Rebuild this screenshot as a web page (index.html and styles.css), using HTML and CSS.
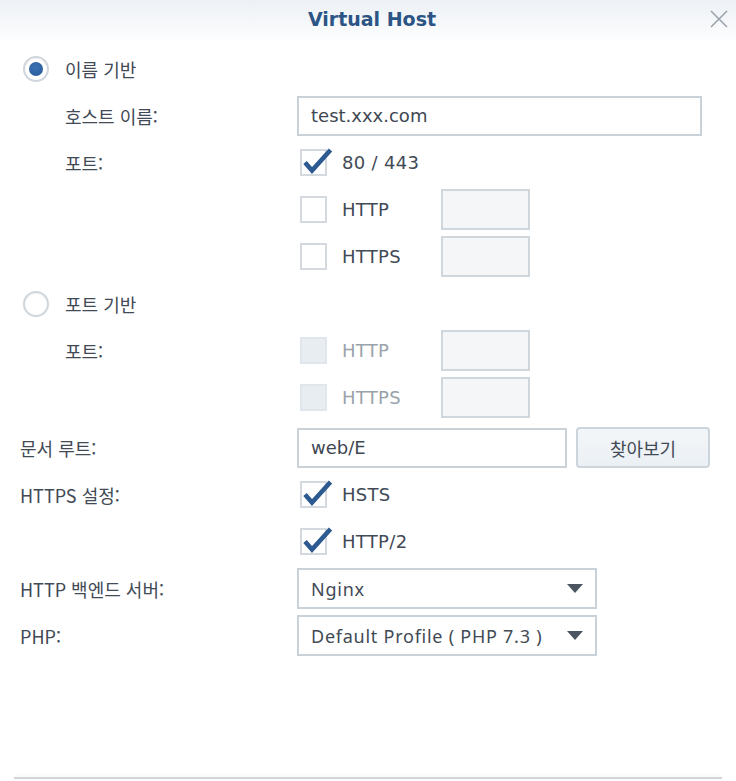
FILE: index.html
```html
<!DOCTYPE html>
<html lang="ko">
<head>
<meta charset="utf-8">
<title>Virtual Host</title>
<link rel="stylesheet" href="styles.css">
</head>
<body>
<div class="dialog">
  <header class="hdr">
    <h1 class="title">Virtual Host</h1>
    <button class="close" aria-label="닫기">
      <svg width="18" height="18" viewBox="0 0 18 18"><path d="M1 1L17 17M17 1L1 17" stroke="#9aa3ac" stroke-width="1.6" fill="none"/></svg>
    </button>
  </header>

  <main class="form">
    <div class="row radio-row">
      <span class="radio on"></span><span class="radio-label">이름 기반</span>
    </div>
    <div class="row sub">
      <span class="lbl">호스트 이름:</span>
      <div class="input wide">test.xxx.com</div>
    </div>
    <div class="row sub">
      <span class="lbl">포트:</span>
      <div class="ctl">
        <span class="cb"><svg class="tick" width="32" height="30" viewBox="0 0 32 30"><path d="M3 15.5L10 23.5L28.5 3" stroke="#2c5a91" stroke-width="4.6" fill="none" stroke-linejoin="miter"/></svg></span>
        <span class="cb-label">80 / 443</span>
      </div>
    </div>
    <div class="row sub">
      <span class="lbl"></span>
      <div class="ctl">
        <span class="cb"></span><span class="cb-label port">HTTP</span><span class="port-input"></span>
      </div>
    </div>
    <div class="row sub">
      <span class="lbl"></span>
      <div class="ctl">
        <span class="cb"></span><span class="cb-label port">HTTPS</span><span class="port-input"></span>
      </div>
    </div>

    <div class="row radio-row">
      <span class="radio"></span><span class="radio-label">포트 기반</span>
    </div>
    <div class="row sub">
      <span class="lbl">포트:</span>
      <div class="ctl">
        <span class="cb disabled"></span><span class="cb-label port muted">HTTP</span><span class="port-input"></span>
      </div>
    </div>
    <div class="row sub">
      <span class="lbl"></span>
      <div class="ctl">
        <span class="cb disabled"></span><span class="cb-label port muted">HTTPS</span><span class="port-input"></span>
      </div>
    </div>

    <div class="row top spaced">
      <span class="lbl">문서 루트:</span>
      <div class="input root">web/E</div>
      <button class="btn">찾아보기</button>
    </div>
    <div class="row top">
      <span class="lbl">HTTPS 설정:</span>
      <div class="ctl">
        <span class="cb"><svg class="tick" width="32" height="30" viewBox="0 0 32 30"><path d="M3 15.5L10 23.5L28.5 3" stroke="#2c5a91" stroke-width="4.6" fill="none"/></svg></span>
        <span class="cb-label">HSTS</span>
      </div>
    </div>
    <div class="row top">
      <span class="lbl"></span>
      <div class="ctl">
        <span class="cb"><svg class="tick" width="32" height="30" viewBox="0 0 32 30"><path d="M3 15.5L10 23.5L28.5 3" stroke="#2c5a91" stroke-width="4.6" fill="none"/></svg></span>
        <span class="cb-label">HTTP/2</span>
      </div>
    </div>
    <div class="row top">
      <span class="lbl">HTTP 백엔드 서버:</span>
      <div class="select"><span class="sel-text">Nginx</span><svg class="arrow" width="16" height="9" viewBox="0 0 16 9"><path d="M0 0H16L8 9Z" fill="#4b5560"/></svg></div>
    </div>
    <div class="row top">
      <span class="lbl">PHP:</span>
      <div class="select"><span class="sel-text">Default Profile ( PHP 7.3 )</span><svg class="arrow" width="16" height="9" viewBox="0 0 16 9"><path d="M0 0H16L8 9Z" fill="#4b5560"/></svg></div>
    </div>
  </main>

  <footer class="foot"></footer>
</div>
</body>
</html>
```
FILE: styles.css
```css
* { box-sizing: border-box; }
html, body { margin: 0; padding: 0; background: #fff; }
body {
  font-family: "DejaVu Sans", "Noto Sans CJK KR", sans-serif;
  color: #414a55;
  font-size: 18px;
}
.dialog {
  width: 736px;
  height: 781px;
  display: flex;
  flex-direction: column;
  background: #fff;
}
.hdr {
  position: relative;
  height: 40px;
  display: flex;
  align-items: center;
  justify-content: center;
  background: linear-gradient(#edf1f5, #fcfdfe);
}
.title {
  margin: 0 0 2px 8px;
  font-family: "DejaVu Sans", sans-serif;
  font-weight: bold;
  font-size: 19px;
  color: #2c5585;
}
.close {
  position: absolute;
  right: 8px;
  top: 10px;
  width: 18px;
  height: 18px;
  padding: 0;
  border: 0;
  background: none;
  display: flex;
}
.form {
  padding: 8px 0 0 20px;
  display: flex;
  flex-direction: column;
  gap: 6px;
}
.row {
  height: 41px;
  display: flex;
  align-items: center;
}
.row.spaced { margin-top: 3px; }
.radio-row { padding-left: 3px; }
.radio {
  width: 26px;
  height: 26px;
  border-radius: 50%;
  border: 2px solid #d0d6db;
  background: #fff;
  display: flex;
  align-items: center;
  justify-content: center;
  box-shadow: inset 0 1px 2px rgba(0,0,0,0.05);
}
.radio.on::after {
  content: "";
  width: 14px;
  height: 14px;
  border-radius: 50%;
  background: radial-gradient(circle at 45% 40%, #3a70b2, #275a99);
}
.radio-label {
  margin-left: 16px;
  font-family: "Noto Sans CJK KR", sans-serif;
}
.lbl {
  font-family: "Noto Sans CJK KR", sans-serif;
  flex: none;
}
.sub { padding-left: 45px; }
.sub .lbl { width: 232px; }
.top .lbl { width: 277px; }
.ctl {
  display: flex;
  align-items: center;
  padding-left: 3px;
}
.cb {
  position: relative;
  width: 27px;
  height: 27px;
  border: 2px solid #d3d9df;
  background: #fff;
  flex: none;
}
.cb.disabled {
  background: #e8edf2;
  border-color: #e0e6eb;
}
.tick {
  position: absolute;
  left: 0;
  top: -4px;
  overflow: visible;
}
.cb-label {
  margin-left: 15px;
  font-family: "DejaVu Sans", sans-serif;
  letter-spacing: 0.3px;
}
.cb-label.port { width: 99px; }
.cb-label.muted { color: #9aa2aa; }
.port-input {
  width: 89px;
  height: 41px;
  border: 2px solid #cfd6dc;
  background: #f4f6f8;
}
.input {
  height: 40px;
  border: 2px solid #cad2d9;
  background: #fff;
  padding-left: 12px;
  display: flex;
  align-items: center;
  font-family: "DejaVu Sans", sans-serif;
  color: #3e4751;
}
.input.wide { width: 405px; }
.input.root { width: 270px; }
.btn {
  margin-left: 9px;
  width: 134px;
  height: 41px;
  border: 2px solid #cdd5dc;
  border-radius: 4px;
  background: linear-gradient(#f3f6f9, #ebf0f4);
  font-family: "Noto Sans CJK KR", sans-serif;
  font-size: 18px;
  color: #414a55;
  padding: 0;
}
.select {
  width: 300px;
  height: 41px;
  border: 2px solid #cad2d9;
  background: #fff;
  display: flex;
  align-items: center;
  padding: 0 12px 0 12px;
  font-family: "Noto Sans", "Noto Sans CJK KR", sans-serif;
}
.sel-text { flex: 1; letter-spacing: 0.75px; }
.arrow { flex: none; }
.foot {
  margin: auto 14px 2px 14px;
  height: 2px;
  background: #d3d6d9;
  box-shadow: 0 -2px 4px rgba(0,0,0,0.05);
}
```
